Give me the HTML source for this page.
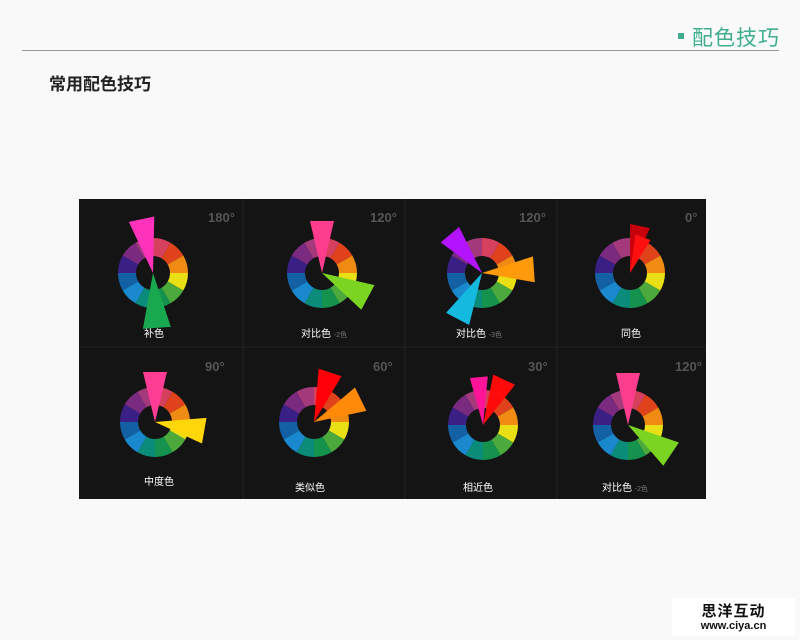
<!DOCTYPE html>
<html><head><meta charset="utf-8"><style>
body{margin:0;width:800px;height:640px;background:#f9f9f9;position:relative;overflow:hidden;font-family:"Liberation Sans","Noto Sans CJK SC",sans-serif}
.hdr{position:absolute;right:20px;top:22px;font-size:21px;color:#3fae90;letter-spacing:1px}
.hdr i{display:inline-block;width:6px;height:6px;background:#3fae90;margin-right:8px;vertical-align:middle;position:relative;top:-3px}
.line{position:absolute;left:22px;top:50px;width:757px;height:1px;background:#999}
.title{position:absolute;left:49px;top:70px;font-size:17px;font-weight:bold;color:#222}
.panel{position:absolute;left:79px;top:199px;width:627px;height:300px;background:#141414}
.lb{position:absolute;color:#fff;font-size:10px;transform:translateX(-50%);white-space:nowrap}
.lb small{color:#777;font-size:7px}
.dg{position:absolute;color:#555;font-size:13px;font-weight:bold}
.logo{position:absolute;left:672px;top:598px;width:123px;height:38px;background:#fff;text-align:center;font-weight:bold;color:#111}
</style></head><body>
<div class="hdr"><i></i>配色技巧</div>
<div class="line"></div>
<div class="title">常用配色技巧</div>
<div class="panel"><svg id="s" width="627" height="300" style="position:absolute;left:0;top:0"></svg>
<div class="dg" style="left:129px;top:11px">180°</div>
<div class="dg" style="left:291px;top:11px">120°</div>
<div class="dg" style="left:440px;top:11px">120°</div>
<div class="dg" style="left:606px;top:11px">0°</div>
<div class="dg" style="left:126px;top:160px">90°</div>
<div class="dg" style="left:294px;top:160px">60°</div>
<div class="dg" style="left:449px;top:160px">30°</div>
<div class="dg" style="left:596px;top:160px">120°</div>
<div class="lb" style="left:75px;top:126px">补色</div>
<div class="lb" style="left:245px;top:126px">对比色 <small>-2色</small></div>
<div class="lb" style="left:400px;top:126px">对比色 <small>-3色</small></div>
<div class="lb" style="left:552px;top:126px">同色</div>
<div class="lb" style="left:80px;top:274px">中度色</div>
<div class="lb" style="left:231px;top:280px">类似色</div>
<div class="lb" style="left:399px;top:280px">相近色</div>
<div class="lb" style="left:546px;top:280px">对比色 <small>-2色</small></div>
</div>
<div class="logo"><div style="font-size:15px;margin-top:2px;letter-spacing:1px">思洋互动</div><div style="font-size:11px;margin-top:-1px">www.ciya.cn</div></div>
<script>
var C=['#d5405e','#e0421c','#ef8a12','#e8df14','#4caa3c','#14924e','#0b8c7a','#1a88cc','#1460a4','#3a1f84','#7a2b80','#a43a7c'];
var cells=[[74,74,[['#ff33bb',-12,55,13],['#19a84f',176,55,14]]],[243,74,[['#ff3d8f',0,52,12],['#7bd422',118,52,14]]],[403,74,[['#b413ff',-40,50,12],['#ff9a0a',86,52,13],['#14b9e0',208,52,13]]],[551,74,[['#c8000e',12,48,10],['#ff1010',20,38,8]]],[76,223,[['#ff3d94',0,50,12],['#ffd60a',100,50,13]]],[235,223,[['#ff0008',18,52,12],['#ff8a0a',64,52,13]]],[404,226,[['#ff1499',-5,48,9],['#ff0a0a',25,50,12]]],[549,226,[['#ff3d8f',0,52,12],['#7bd422',124,52,14]]]];
var h='',R=35,r=17;
function p(cx,cy,a,d){a=(a-90)*Math.PI/180;return (cx+d*Math.cos(a)).toFixed(1)+','+(cy+d*Math.sin(a)).toFixed(1)}
cells.forEach(function(c){var x=c[0],y=c[1];
for(var i=0;i<12;i++){var a0=i*30,a1=a0+30;
h+='<path fill="'+C[i]+'" d="M'+p(x,y,a0,R)+' A'+R+','+R+' 0 0 1 '+p(x,y,a1,R)+' L'+p(x,y,a1,r)+' A'+r+','+r+' 0 0 0 '+p(x,y,a0,r)+'Z"/>';}
c[2].forEach(function(t){var L=t[2],w=Math.atan(t[3]/L)*180/Math.PI,D=Math.sqrt(L*L+t[3]*t[3]);
h+='<polygon fill="'+t[0]+'" points="'+x+','+y+' '+p(x,y,t[1]-w,D)+' '+p(x,y,t[1]+w,D)+'"/>';});});
h+='<line x1="164" y1="0" x2="164" y2="300" stroke="#222"/><line x1="326" y1="0" x2="326" y2="300" stroke="#222"/><line x1="478" y1="0" x2="478" y2="300" stroke="#222"/><line x1="0" y1="148" x2="627" y2="148" stroke="#222"/>';
document.getElementById('s').innerHTML=h;
</script>
</body></html>
